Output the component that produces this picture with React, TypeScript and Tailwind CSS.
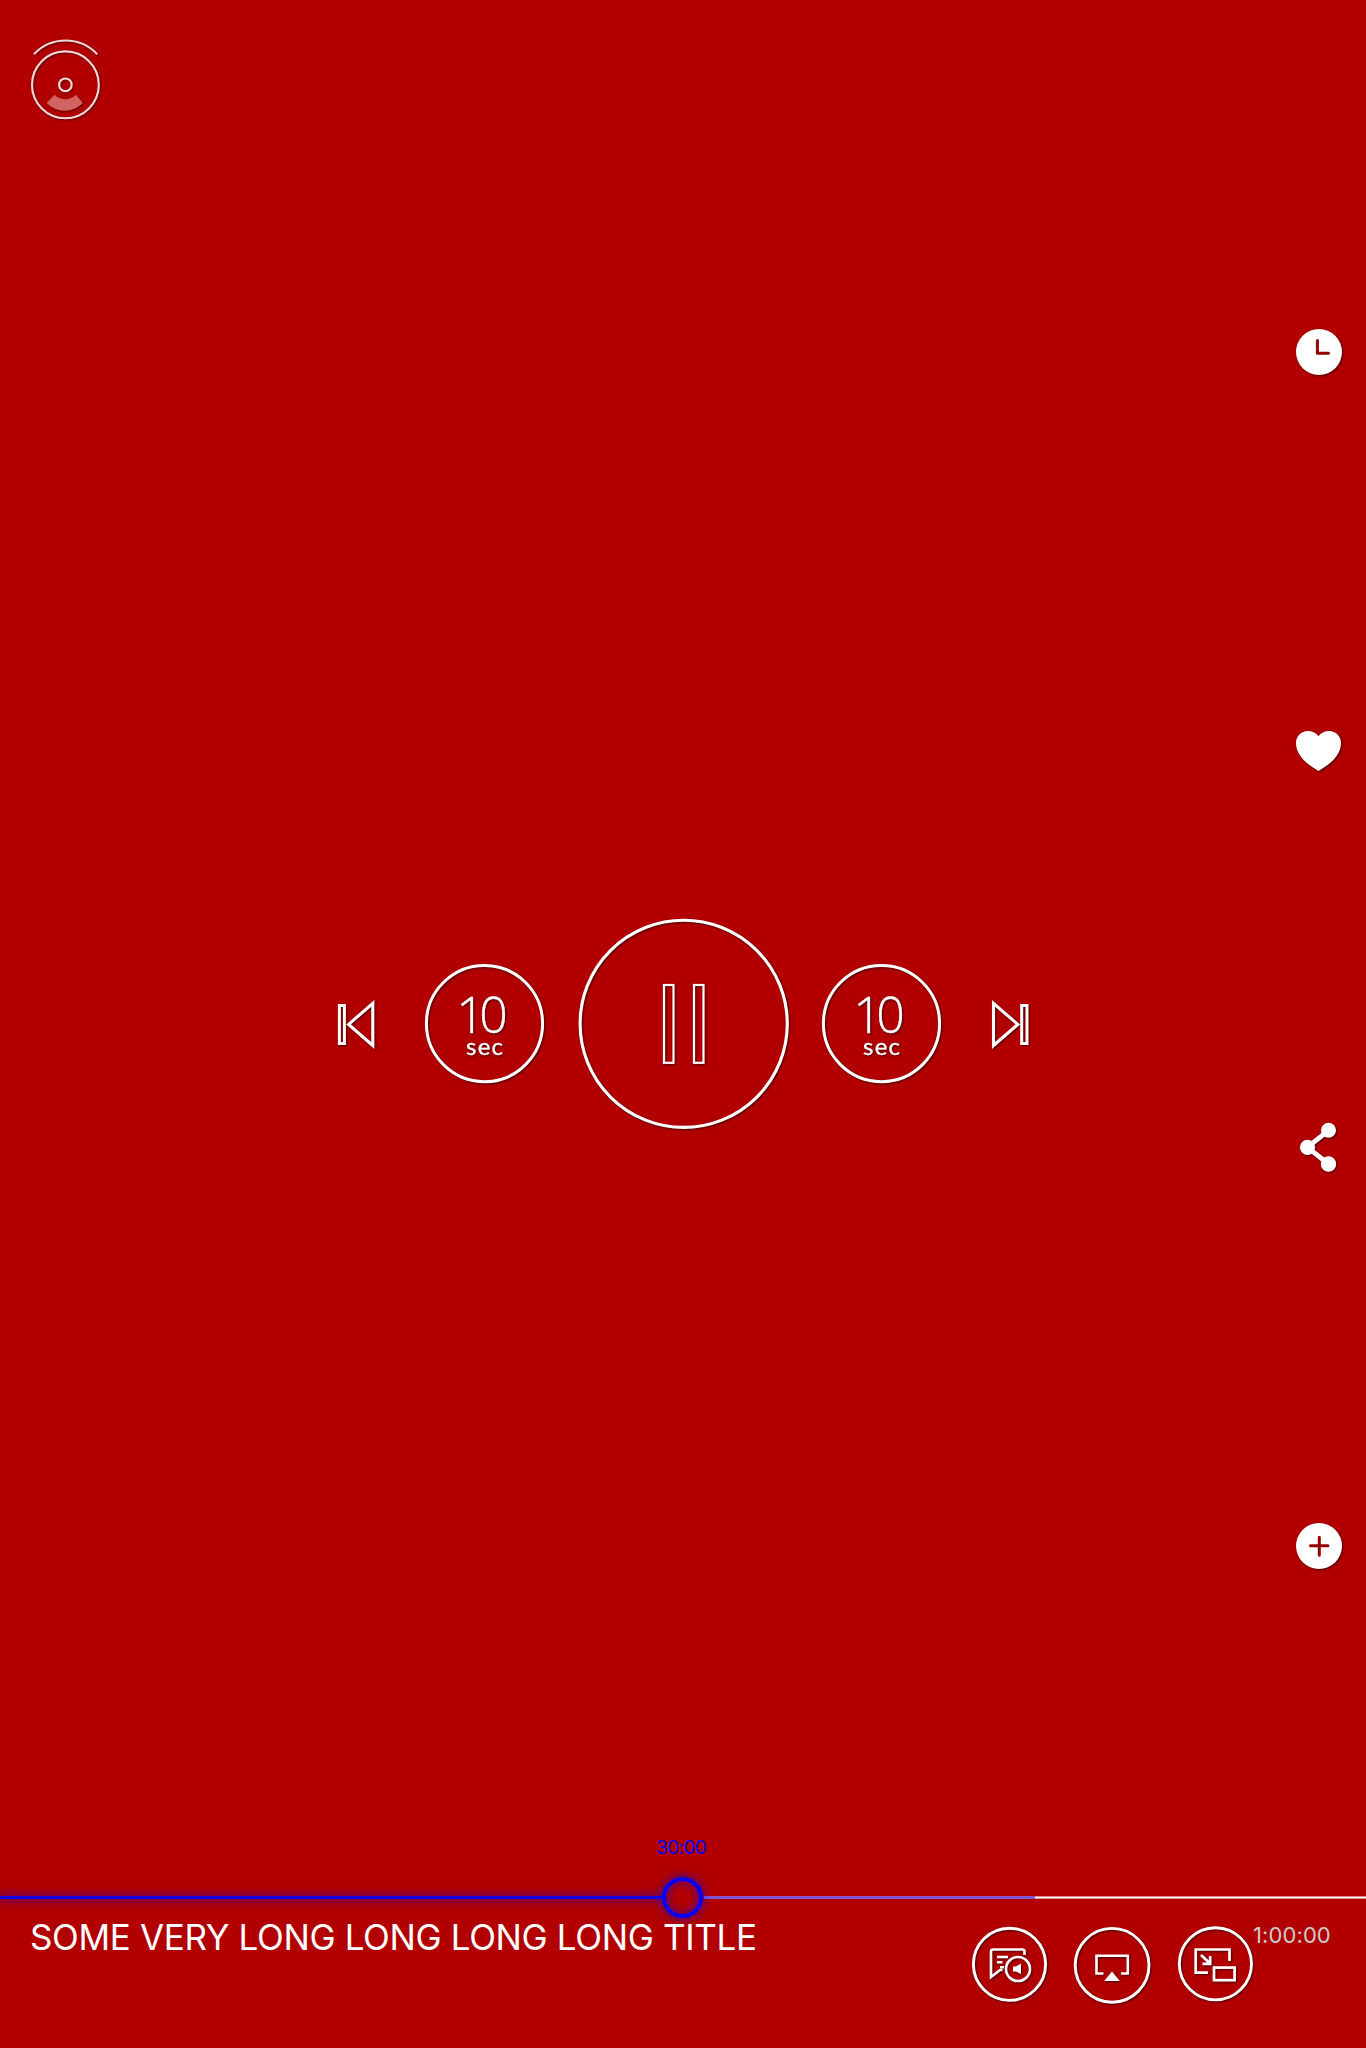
import type { ReactNode } from "react";

const shadow = "drop-shadow-[1px_1px_1px_rgba(0,0,0,0.6)]";

function Icon({ box, children, className = "" }: { box: [number, number, number, number]; children: ReactNode; className?: string }) {
  return (
    <svg
      width={box[2]}
      height={box[3]}
      viewBox={box.join(" ")}
      fill="none"
      stroke="white"
      className={`block shrink-0 overflow-visible ${className}`}
    >
      {children}
    </svg>
  );
}

function Seek({ label, className }: { label: string; className: string }) {
  return (
    <button aria-label={label} className={className}>
      <Icon box={[0, 0, 122, 122]} className={shadow}>
        <circle cx="60.5" cy="60.6" r="58.1" strokeWidth="3" />
        <text x="32.3" y="69.7" textLength="51.5" fill="white" stroke="white" strokeWidth="0.4" fontSize="50" className="font-['Open_Sans'] font-light">10</text>
        <text x="42" y="91.9" textLength="37" fill="white" stroke="white" strokeWidth="0.35" fontSize="24" className="font-['Lato'] font-normal">sec</text>
      </Icon>
    </button>
  );
}

function Rail() {
  return (
    <nav className="flex w-[72px] flex-col pt-[327px]">
      <button aria-label="Watch later">
        <Icon box={[0, 0, 50, 50]} className={shadow}>
          <circle cx="25" cy="25" r="23" fill="white" stroke="none" />
          <path d="M23.4 13.5V26.3H34.5" stroke="#960000" strokeWidth="3" strokeLinecap="round" strokeLinejoin="round" />
        </Icon>
      </button>
      <button aria-label="Favourite" className="mt-[349px]">
        <Icon box={[0, 0, 50, 50]} className={shadow}>
          <path d="M24.5 10C21.5 6.5 18 5 14 5C7 5 2 10.5 2 17C2 29 12 37.5 24.5 45C37 37.5 47 29 47 17C47 10.5 42 5 35 5C31 5 27.5 6.5 24.5 10Z" fill="white" stroke="none" />
        </Icon>
      </button>
      <button aria-label="Share" className="mt-[346px]">
        <Icon box={[0, 0, 50, 50]} className={shadow}>
          <path d="M34.5 8.3L13.5 25.3L34.5 42" strokeWidth="4.8" />
          <g fill="white" stroke="none">
            <circle cx="34.5" cy="8.3" r="7.5" />
            <circle cx="13.5" cy="25.3" r="7.6" />
            <circle cx="34.5" cy="42" r="7.7" />
          </g>
        </Icon>
      </button>
      <button aria-label="Add" className="mt-[349px]">
        <Icon box={[0, 0, 50, 50]} className={shadow}>
          <circle cx="25" cy="25" r="23" fill="white" stroke="none" />
          <path d="M25.3 16.2V34.2M16.5 24.8H34" stroke="#960000" strokeWidth="3" strokeLinecap="round" />
        </Icon>
      </button>
    </nav>
  );
}

function Transport() {
  return (
    <div className="flex items-center">
      <button aria-label="Previous">
        <Icon box={[336, 998, 42, 52]} className={shadow}>
          <rect x="339.4" y="1005.5" width="5" height="38" strokeWidth="3" />
          <path d="M372.8 1003.3V1045.5L348.6 1024.4Z" strokeWidth="3.1" />
        </Icon>
      </button>
      <Seek label="Back 10 seconds" className="ml-[46px]" />
      <button aria-label="Pause" className="ml-8">
        <Icon box={[578, 918, 212, 212]} className={shadow}>
          <circle cx="683.7" cy="1023.8" r="103.6" strokeWidth="3.1" />
          <rect x="664" y="985" width="9.5" height="77.8" strokeWidth="2.2" />
          <rect x="694" y="985" width="9.5" height="77.8" strokeWidth="2.2" />
        </Icon>
      </button>
      <Seek label="Forward 10 seconds" className="ml-[31px]" />
      <button aria-label="Next" className="ml-[47px]">
        <Icon box={[990, 998, 42, 52]} className={shadow}>
          <rect x="1021.7" y="1005.5" width="5.3" height="38" strokeWidth="3" />
          <path d="M993.5 1003.3V1045.5L1017.8 1024.4Z" strokeWidth="3.1" />
        </Icon>
      </button>
    </div>
  );
}

function Timeline() {
  return (
    <div className="relative flex h-[3px] w-full">
      <div className="h-[3px] w-[663px] bg-[#1200e8] shadow-[0_0_10px_1px_rgba(0,0,255,0.6)]" />
      <div className="w-[41px]" />
      <div className="h-[3px] w-[331px] bg-[#8058d2]" />
      <div className="h-[3px] flex-1 border-y border-[#dd9090] bg-white" />
      <div className="absolute left-[662px] top-[-19px] size-[41px] rounded-full border-4 border-[#0000ff] shadow-[0_0_10px_1px_rgba(0,0,255,0.6),inset_0_0_10px_1px_rgba(0,0,255,0.5)]" />
      <span className="absolute left-[656px] top-[-60px] whitespace-nowrap font-['Inter'] text-[19px] leading-[24px] tracking-[-0.6px] text-[#0000ff]">30:00</span>
    </div>
  );
}

function Footer() {
  return (
    <footer className="flex flex-1 items-start">
      <h1 className="w-[971px] whitespace-nowrap pl-[30px] pt-4 font-['Inter'] text-[35px] font-normal leading-[44px] tracking-[-0.36px] text-white">
        SOME VERY LONG LONG LONG LONG TITLE
      </h1>
      <button aria-label="Audio and subtitles" className="mt-[26px]">
        <Icon box={[971, 1925, 78, 80]} className={shadow}>
          <circle cx="1009.5" cy="1964.3" r="36.1" strokeWidth="2.9" />
          <path d="M1024.5 1955V1951.5Q1024.5 1949.5 1022.5 1949.5H993Q991 1949.5 991 1951.5V1977L1000 1970H1002.5" strokeWidth="2.6" />
          <path d="M997 1957H1008M997 1962.3H1002.5M1000 1967.3H1004" strokeWidth="2.4" />
          <circle cx="1018" cy="1969" r="12" strokeWidth="2.6" />
          <path d="M1013 1966.5H1016L1021 1963.5V1974L1016 1971.5H1013Z" fill="white" stroke="none" />
        </Icon>
      </button>
      <button aria-label="AirPlay" className="ml-[24px] mt-[26px]">
        <Icon box={[1073, 1925, 80, 80]} className={shadow}>
          <circle cx="1112.1" cy="1965.3" r="36.9" strokeWidth="2.9" />
          <path d="M1103.5 1973.5H1096.5V1955.8H1127.8V1973.5H1121" strokeWidth="2.6" />
          <path d="M1112 1971.5L1119.8 1981H1104.2Z" fill="white" stroke="none" />
        </Icon>
      </button>
      <button aria-label="Picture in picture" className="ml-[24px] mt-[26px]">
        <Icon box={[1177, 1925, 76, 80]} className={shadow}>
          <circle cx="1215.4" cy="1963.8" r="36.1" strokeWidth="2.9" />
          <path d="M1229.5 1961V1949.5H1195.7V1972.7H1208" strokeWidth="2.7" />
          <path d="M1201 1955L1210 1963.5M1202.5 1963.8H1210.2V1956" strokeWidth="2.7" />
          <rect x="1214" y="1967.6" width="20.6" height="12.6" strokeWidth="2.7" />
        </Icon>
      </button>
      <span className="mt-[23px] font-['Inter'] text-[22px] font-normal leading-[26px] tracking-[0.1px] text-[#cccccc]">1:00:00</span>
    </footer>
  );
}

export default function App() {
  return (
    <div className="flex h-[2048px] w-[1366px] flex-col overflow-hidden bg-[#b20000]">
      <main className="flex h-[1896px] shrink-0">
        <div className="w-[336px] pl-7 pt-9">
          <Icon box={[28, 36, 75, 86]} className="opacity-85 drop-shadow-[1px_1px_1px_rgba(0,0,0,0.6)]">
            <path d="M34 54.2A43.3 43.3 0 0 1 97.2 54.2" strokeWidth="2.1" />
            <circle cx="65.4" cy="84.8" r="33.4" strokeWidth="2.1" />
            <circle cx="65.4" cy="84.8" r="6.3" strokeWidth="2.2" />
            <path d="M54.6 94.8A15 15 0 0 0 76 94.8L82.8 103A25 25 0 0 1 46.6 103Z" fill="#d97575" stroke="none" />
          </Icon>
        </div>
        <div className="w-[958px] pt-[918px]"><Transport /></div>
        <Rail />
      </main>
      <Timeline />
      <Footer />
    </div>
  );
}
